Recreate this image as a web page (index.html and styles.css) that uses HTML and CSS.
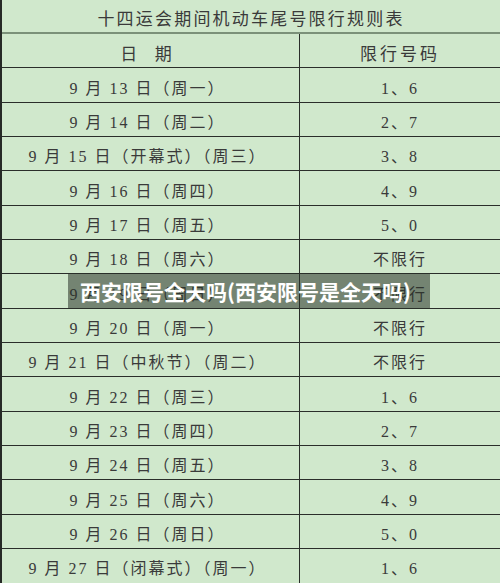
FILE: index.html
```html
<!DOCTYPE html>
<html lang="zh">
<head>
<meta charset="utf-8">
<link rel="stylesheet" href="styles.css">
</head>
<body>
<div class="sheet">
  <div class="title">十四运会期间机动车尾号限行规则表</div>
  <div class="grid">
    <div class="cell l head">日&nbsp;&nbsp;期</div><div class="cell r head">限行号码</div>
    <div class="cell l">9 月 13 日（周一）</div><div class="cell r">1、6</div>
    <div class="cell l">9 月 14 日（周二）</div><div class="cell r">2、7</div>
    <div class="cell l">9 月 15 日（开幕式）（周三）</div><div class="cell r">3、8</div>
    <div class="cell l">9 月 16 日（周四）</div><div class="cell r">4、9</div>
    <div class="cell l">9 月 17 日（周五）</div><div class="cell r">5、0</div>
    <div class="cell l">9 月 18 日（周六）</div><div class="cell r">不限行</div>
    <div class="cell l">9 月 19 日（周日）</div><div class="cell r">不限行</div>
    <div class="cell l">9 月 20 日（周一）</div><div class="cell r">不限行</div>
    <div class="cell l">9 月 21 日（中秋节）（周二）</div><div class="cell r">不限行</div>
    <div class="cell l">9 月 22 日（周三）</div><div class="cell r">1、6</div>
    <div class="cell l">9 月 23 日（周四）</div><div class="cell r">2、7</div>
    <div class="cell l">9 月 24 日（周五）</div><div class="cell r">3、8</div>
    <div class="cell l">9 月 25 日（周六）</div><div class="cell r">4、9</div>
    <div class="cell l">9 月 26 日（周日）</div><div class="cell r">5、0</div>
    <div class="cell l">9 月 27 日（闭幕式）（周一）</div><div class="cell r">1、6</div>
  </div>
  <div class="overlay">西安限号全天吗(西安限号是全天吗)</div>
</div>
</body>
</html>
```
FILE: styles.css
```css
html, body {
  margin: 0;
  padding: 0;
  background: #d0e8cc;
}
body {
  width: 500px;
  height: 583px;
  overflow: hidden;
}
.sheet {
  position: relative;
  width: 500px;
  height: 583px;
  box-sizing: border-box;
  border-left: 2px solid #262a26;
  background: #d0e8cc;
  font-family: "Liberation Serif", "Noto Sans CJK SC", serif;
  color: #3a3a3a;
  overflow: hidden;
}
.title {
  border-bottom: 2px solid #7b9179;
  display: flex;
  align-items: center;
  justify-content: center;
  font-size: 17px;
  letter-spacing: 2.2px;
  padding-top: 2px;
  box-sizing: border-box;
  height: 34px;
}
.grid {
  display: grid;
  grid-template-columns: 298px 1fr;
  grid-auto-rows: 34.35px;
}
.cell {
  box-sizing: border-box;
  border-bottom: 1px solid #2a2e2a;
  display: flex;
  align-items: center;
  justify-content: center;
  font-size: 16px;
  letter-spacing: 2px;
  padding-top: 3px;
  white-space: pre;
}
.cell.l {
  border-right: 1px solid #2a2e2a;
  padding-right: 6px;
}
.cell.head {
  font-size: 17px;
  letter-spacing: 3px;
}
.overlay {
  position: absolute;
  left: 66px;
  top: 273px;
  width: 362px;
  height: 36px;
  background: rgba(40, 50, 40, 0.55);
  color: #ffffff;
  font-family: "Noto Sans CJK SC", "Noto Sans", sans-serif;
  font-weight: 700;
  font-size: 21px;
  letter-spacing: 0;
  display: flex;
  align-items: center;
  padding-left: 12px;
  box-sizing: border-box;
  white-space: nowrap;
}
```
